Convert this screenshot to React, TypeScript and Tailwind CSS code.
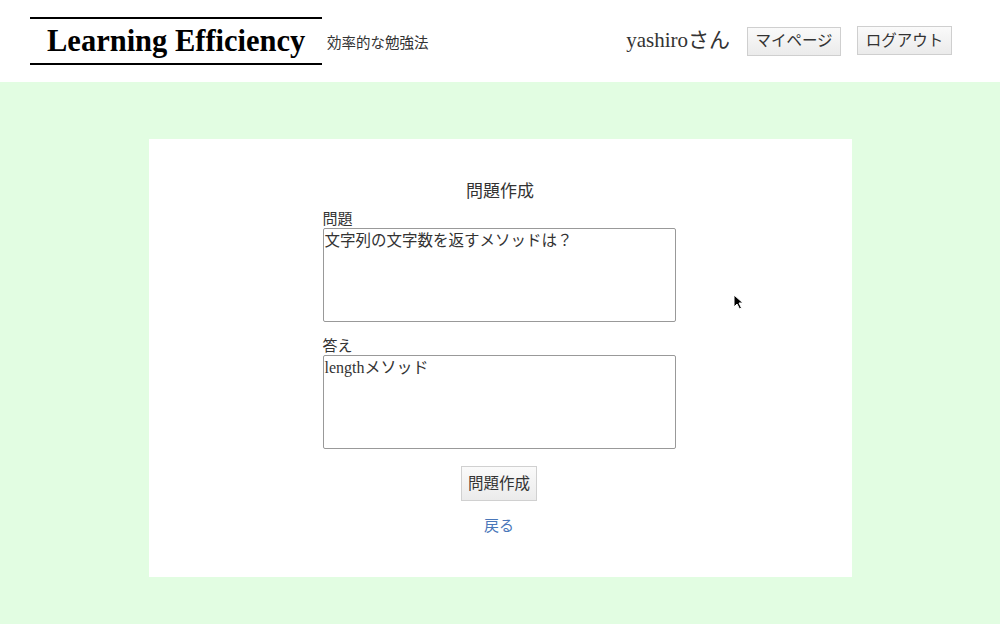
import React, { useState } from 'react';

const App: React.FC = () => {
  const [question, setQuestion] = useState('文字列の文字数を返すメソッドは？');
  const [answer, setAnswer] = useState('lengthメソッド');

  return (
    <div className="relative min-h-[624px] bg-[#e2fde2] font-['Liberation_Serif','Noto_Sans_CJK_JP',serif] text-[#222]">
      <header className="flex h-[82px] items-center justify-between bg-white pl-[30px] pr-[48px]">
        <div className="flex items-center">
          <h1 className="flex h-[48px] w-[292px] items-center border-y-2 border-black pl-[17px] text-[30.5px] font-bold leading-none text-black">
            Learning Efficiency
          </h1>
          <span className="ml-[5px] mt-[6px] text-[14.5px] text-[#333]">効率的な勉強法</span>
        </div>
        <div className="flex items-center">
          <span className="mr-[17px] text-[21px] text-[#333]">yashiroさん</span>
          <button className="mr-[16px] h-[29px] w-[94px] border border-[#cfcfcf] bg-gradient-to-b from-[#fafafa] to-[#ebebeb] text-[15.5px] text-[#333]">
            マイページ
          </button>
          <button className="mb-[1px] h-[29px] w-[95px] border border-[#cfcfcf] bg-gradient-to-b from-[#fafafa] to-[#ebebeb] text-[15.5px] text-[#333]">
            ログアウト
          </button>
        </div>
      </header>

      <main className="pt-[57px]">
        <div className="mx-auto flex h-[438px] w-[703px] flex-col items-center bg-white pt-[43px]">
          <h2 className="text-[17px] leading-[20px] text-[#333]">問題作成</h2>
          <form className="ml-[-2px] mt-[8px] flex w-[353px] flex-col" onSubmit={(e) => e.preventDefault()}>
            <label className="text-[15px] leading-[18px] text-[#333]">問題</label>
            <textarea
              value={question}
              onChange={(e) => setQuestion(e.target.value)}
              className="h-[94px] w-[353px] resize-none rounded-[2px] border border-[#999] px-[1px] pt-[2px] text-[15.5px] leading-[20px] text-[#333] outline-none"
            />
            <label className="mt-[15px] text-[15px] leading-[18px] text-[#333]">答え</label>
            <textarea
              value={answer}
              onChange={(e) => setAnswer(e.target.value)}
              className="h-[94px] w-[353px] resize-none rounded-[2px] border border-[#999] px-[1px] pt-[2px] text-[16px] leading-[20px] text-[#333] outline-none"
            />
            <button
              type="submit"
              className="mx-auto mt-[17px] h-[35px] w-[76px] border border-[#d0d0d0] bg-gradient-to-b from-[#fafafa] to-[#ebebeb] text-[15.5px] text-[#333]"
            >
              問題作成
            </button>
            <a href="#" className="mx-auto mt-[14px] text-[15px] text-[#4a77b9]">
              戻る
            </a>
          </form>
        </div>
      </main>

      <svg className="absolute left-[733px] top-[294px]" width="12" height="17" viewBox="0 0 12 17">
        <path d="M1 1 L1 13 L4 10 L6.5 15 L8.5 14 L6 9 L10 9 Z" fill="#000" stroke="#fff" strokeWidth="1" />
      </svg>
    </div>
  );
};

export default App;
